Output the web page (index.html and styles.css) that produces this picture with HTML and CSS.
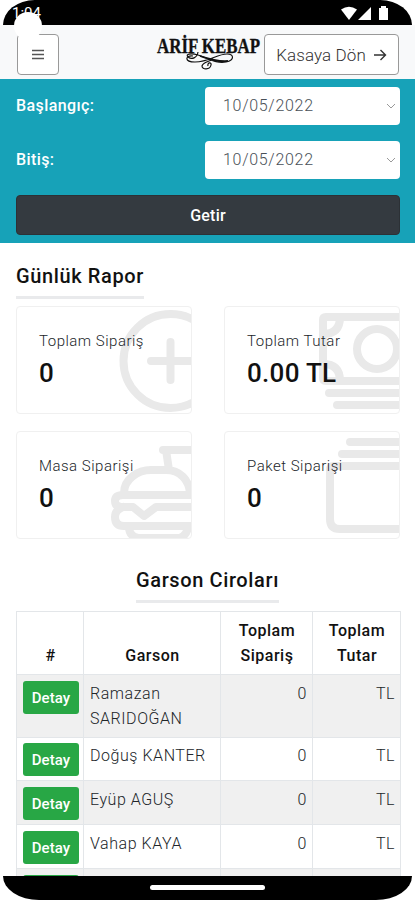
FILE: index.html
```html
<!DOCTYPE html>
<html lang="tr">
<head>
	<meta charset="utf-8">
	<meta name="viewport" content="width=device-width, initial-scale=1">
	<title>Günlük Rapor</title>
	<link rel="stylesheet" href="styles.css">
</head>
<body>
	<div class="statusbar">
		<span class="clock">1:04</span>
		<span class="camera"></span>
		<svg class="status-icons" width="50" height="16" viewBox="0 0 50 16" fill="#fff">
			<path d="M1 3.500Q9-2 17 3.500L9 14Z"/>
			<path d="M31 1V14H18Z"/>
			<path d="M41 0h5v2h2v12h-9V2h2Z"/>
		</svg>
	</div>
	<div class="page">
		<header class="navbar">
			<button class="btn-outline menu">
				<svg width="14" height="12" viewBox="0 0 14 12" stroke="#555" stroke-width="1.300">
					<path d="M1 1.500h12M1 5.500h12M1 9.500h12"/>
				</svg>
			</button>
			<svg class="logo" width="104" height="40" viewBox="0 0 104 40">
				<text x="0" y="19" textLength="103" lengthAdjust="spacingAndGlyphs">ARİF KEBAP</text>
				<path d="M41 18C40 24 35 26 31 23C28 20 34 19 41 21C51 24 59 30 69 28C78 26 77 20 70 20C60 20 52 28 38 28C27 28 28 21 36 22M56 25C52 28 46 28 45 32C45 36 53 36 54 31C55 28 50 28 51 32" fill="none" stroke="#111" stroke-width="1.200"/>
				<path d="M43 22C52 25 61 28 71 27" fill="none" stroke="#111" stroke-width="1.800"/>
			</svg>
			<button class="btn-outline back">
				<span>Kasaya Dön</span>
				<svg width="14" height="14" viewBox="0 0 14 14" fill="none" stroke="#333" stroke-width="1.400">
					<path d="M1 7h11.500M7.500 2l5 5-5 5"/>
				</svg>
			</button>
		</header>
		<form class="filter">
			<div class="field">
				<label>Başlangıç:</label>
				<div class="date">
					<span>10/05/2022</span>
					<svg width="10" height="6" viewBox="0 0 10 6" fill="none" stroke="#999"><path d="M1 1l4 4 4-4"/></svg>
				</div>
			</div>
			<div class="field">
				<label>Bitiş:</label>
				<div class="date">
					<span>10/05/2022</span>
					<svg width="10" height="6" viewBox="0 0 10 6" fill="none" stroke="#999"><path d="M1 1l4 4 4-4"/></svg>
				</div>
			</div>
			<button type="button" class="btn-dark">Getir</button>
		</form>

		<h2 class="title">Günlük Rapor</h2>
		<div class="cards">
			<div class="card">
				<svg class="card-icon" viewBox="0 0 174 106">
					<circle cx="153.500" cy="54" r="47"/>
					<path d="M153.500 35v38M134 54h39"/>
				</svg>
				<p>Toplam Sipariş</p>
				<strong>0</strong>
			</div>
			<div class="card">
				<svg class="card-icon" viewBox="0 0 174 106">
					<path d="M180 10H101Q98 10 98 13V71Q98 74 101 74H180M98 27Q115 27 115 10M98 57Q115 57 115 74M104 86H180M112 98H180"/>
					<circle cx="152" cy="42" r="20"/>
				</svg>
				<p>Toplam Tutar</p>
				<strong class="amount">0.00 TL</strong>
			</div>
			<div class="card">
				<svg class="card-icon" viewBox="0 0 174 106">
					<path d="M146 18H180M149 18L152 38M107 61C107 47 121 38 134 38H149C163 38 172 48 173 61M180 63H106Q98 63 98 69Q98 75 106 75H116L127 84L139 75H180M106 75Q98 78 98 85Q98 94 107 94H180M112 95Q112 104 121 106H163Q170 103 171 95"/>
				</svg>
				<p>Masa Siparişi</p>
				<strong>0</strong>
			</div>
			<div class="card">
				<svg class="card-icon" viewBox="0 0 174 106">
					<path d="M125 10H180M117 22H180M180 34H109Q105 34 105 38V87Q105 97 115 97H180"/>
				</svg>
				<p>Paket Siparişi</p>
				<strong>0</strong>
			</div>
		</div>

		<h2 class="title center">Garson Ciroları</h2>
		<table class="report">
			<colgroup><col class="c1"><col class="c2"><col class="c3"><col class="c4"></colgroup>
			<thead>
				<tr><th>#</th><th>Garson</th><th>Toplam Sipariş</th><th>Toplam Tutar</th></tr>
			</thead>
			<tbody>
				<tr><td><button class="btn-green">Detay</button></td><td>Ramazan SARIDOĞAN</td><td>0</td><td>TL</td></tr>
				<tr><td><button class="btn-green">Detay</button></td><td>Doğuş KANTER</td><td>0</td><td>TL</td></tr>
				<tr><td><button class="btn-green">Detay</button></td><td>Eyüp AGUŞ</td><td>0</td><td>TL</td></tr>
				<tr><td><button class="btn-green">Detay</button></td><td>Vahap KAYA</td><td>0</td><td>TL</td></tr>
				<tr><td><button class="btn-green"></button></td><td></td><td></td><td></td></tr>
			</tbody>
		</table>
	</div>
	<div class="homebar"><span></span></div>
</body>
</html>
```
FILE: styles.css
```css
*
{
	box-sizing: border-box;
}
body
{
	margin: 0;
	height: 900px;
	display: flex;
	flex-direction: column;
	overflow: hidden;
	background: #fff;
	color: #212529;
	font-family: Roboto, sans-serif;
	font-size: 16px;
	font-weight: 300;
}
button
{
	font-family: inherit;
	padding: 0;
}
.statusbar
{
	position: relative;
	height: 25px;
	margin: 0 3px;
	background: #000;
	border-radius: 33px 33px 0 0 / 26px 26px 0 0;
	display: flex;
	justify-content: space-between;
	padding: 6px 22px 0 9px;
}
.clock
{
	color: #fff;
	font-size: 15px;
	line-height: 15px;
	font-weight: 400;
}
.camera
{
	position: absolute;
	left: 11px;
	top: 12px;
	width: 28px;
	height: 28px;
	border-radius: 50%;
	background: #fff;
	z-index: 2;
}
.page
{
	flex: 1;
	min-height: 0;
	overflow: hidden;
}
.navbar
{
	height: 54px;
	background: #f8f9fa;
	padding: 9px 16px 0 17px;
	display: flex;
}
.btn-outline
{
	height: 41px;
	border: 1px solid #999;
	border-radius: 4px;
	background: #fff;
	color: #333;
	display: flex;
	align-items: center;
	justify-content: center;
}
.menu
{
	width: 42px;
}
.logo
{
	margin: 0 3px 0 98px;
	overflow: visible;
}
.logo text
{
	font-family: "Liberation Serif", serif;
	font-size: 20px;
	font-weight: bold;
	fill: #111;
	stroke: #111;
	stroke-width: .3px;
}
.back
{
	width: 135px;
	gap: 7px;
	font-size: 17px;
	font-weight: 300;
	letter-spacing: .1px;
}
.filter
{
	height: 164px;
	padding: 8px 15px 0 16px;
	background: #17a2b8;
}
.field
{
	display: flex;
	justify-content: space-between;
	margin-bottom: 16px;
	color: #fff;
	font-weight: 500;
	line-height: 38px;
	letter-spacing: .4px;
}
.date
{
	width: 195px;
	height: 38px;
	padding: 0 4px 0 18px;
	background: #fff;
	border-radius: 4px;
	display: flex;
	align-items: center;
	justify-content: space-between;
	color: #495057;
	font-weight: 300;
	letter-spacing: .7px;
}
.btn-dark
{
	width: 100%;
	height: 40px;
	border: 1px solid #2c3136;
	border-radius: 4px;
	background: #343a40;
	color: #fff;
	font-size: 16px;
	font-weight: 500;
	letter-spacing: .2px;
}
.title
{
	width: fit-content;
	height: 37px;
	margin: 19px 16px 7px;
	border-bottom: 3px solid #e9eaec;
	color: #111;
	font-size: 20px;
	font-weight: 500;
	line-height: 28px;
	letter-spacing: .62px;
}
.center
{
	margin: 27px auto 8px;
}
.cards
{
	display: grid;
	grid-template-columns: 176px 176px;
	column-gap: 32px;
	row-gap: 17px;
	padding-left: 16px;
}
.card
{
	position: relative;
	height: 108px;
	padding: 24px 0 0 22px;
	border: 1px solid #f0f0f0;
	border-radius: 4px;
	overflow: hidden;
}
.card-icon
{
	position: absolute;
	left: 0;
	top: 0;
	width: 174px;
	height: 106px;
	fill: none;
	stroke: #e9e9e9;
	stroke-width: 8px;
	stroke-linecap: round;
	stroke-linejoin: round;
}
.card p
{
	position: relative;
	margin: 0 0 11px;
	font-size: 15px;
	line-height: 20px;
	letter-spacing: .5px;
}
.card strong
{
	position: relative;
	display: block;
	color: #111;
	font-size: 26px;
	line-height: 22px;
	font-weight: 500;
}
.card .amount
{
	letter-spacing: .3px;
}
.report
{
	width: 384px;
	margin-left: 16px;
	table-layout: fixed;
	border-collapse: collapse;
}
.c1 { width: 67px; }
.c2 { width: 137px; }
.c3 { width: 92px; }
.c4 { width: 88px; }
.report th
{
	height: 63px;
	padding: 6px 9px 6px 10px;
	border: 1px solid #e3e6e9;
	color: #111;
	font-weight: 500;
	line-height: 25px;
	letter-spacing: .5px;
	vertical-align: bottom;
}
.report td
{
	height: 44px;
	padding: 6px;
	border: 1px solid #e3e6e9;
	line-height: 25px;
	letter-spacing: .55px;
	vertical-align: top;
}
.report td:nth-child(1)
{
	padding: 6px 5px 4px 6px;
}
.report td:nth-child(n+3)
{
	padding-right: 5px;
	text-align: right;
}
.report tbody tr:nth-child(odd)
{
	background: #f0f0f0;
}
.report tbody tr:nth-child(2) td
{
	height: 43px;
	padding-top: 5px;
}
.btn-green
{
	display: block;
	width: 56px;
	height: 33px;
	border: 0;
	border-radius: 3px;
	background: #28a745;
	color: #fff;
	font-size: 15px;
	font-weight: 500;
	letter-spacing: .1px;
}
.homebar
{
	height: 24px;
	margin: 0 3px;
	padding-top: 9px;
	background: #000;
	border-radius: 0 0 36px 36px / 0 0 24px 24px;
}
.homebar span
{
	display: block;
	width: 115px;
	height: 5px;
	margin: 0 auto;
	border-radius: 3px;
	background: #fff;
}
```
